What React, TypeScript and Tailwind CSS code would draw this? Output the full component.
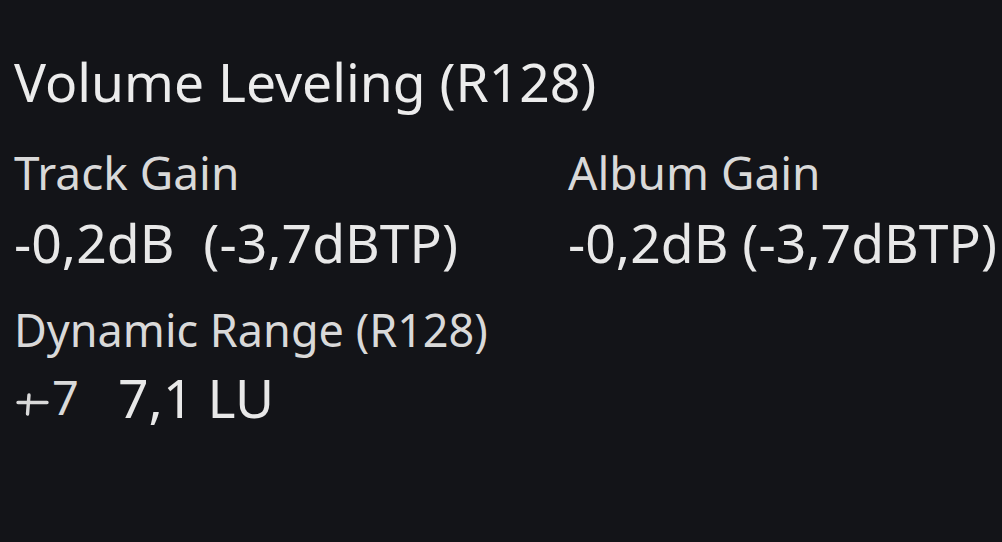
const font = { fontFamily: '"Noto Sans", "Open Sans", sans-serif' };

function Field({ label, value, className }: { label: string; value: React.ReactNode; className?: string }) {
  return (
    <div className={className}>
      <div className="text-[46px] leading-[60px] text-[#d9d9d9]">{label}</div>
      <div className="mt-[8px] text-[53.5px] leading-[66px] text-[#e8e8e8] whitespace-pre">{value}</div>
    </div>
  );
}

// small "+/-7" dynamic range badge
function DrIcon() {
  return (
    <span className="inline-flex w-[104px] items-end text-[#d9d9d9]">
      <svg width="38" height="40" viewBox="0 0 38 40">
        <path d="M4 11.5h29M15 4l-1.5 19" stroke="currentColor" strokeWidth="3.4" strokeLinecap="round" fill="none" />
      </svg>
      <span className="mb-[8px] text-[47px] leading-[52px]">7</span>
    </span>
  );
}

export default function App() {
  return (
    <div className="h-[542px] w-[1002px] overflow-hidden bg-[#131418] pl-[14px] pt-[47px]" style={font}>
      <h1 className="text-[53.4px] leading-[70px] text-[#ececec]">Volume Leveling (R128)</h1>

      <div className="mt-[25px] grid grid-cols-[554px_1fr]">
        <Field
          label="Track Gain"
          value={
            <>
              -0,2dB <span className="ml-[15px]">(-3,7dBTP)</span>
            </>
          }
        />
        <Field label="Album Gain" value="-0,2dB (-3,7dBTP)" />
      </div>

      <div className="mt-[24px]">
        <div className="text-[45px] leading-[60px] text-[#d9d9d9]">Dynamic Range (R128)</div>
        <div className="mt-[5px] flex items-end">
          <DrIcon />
          <span className="text-[53.5px] leading-[66px] text-[#e8e8e8]">7,1 LU</span>
        </div>
      </div>
    </div>
  );
}
